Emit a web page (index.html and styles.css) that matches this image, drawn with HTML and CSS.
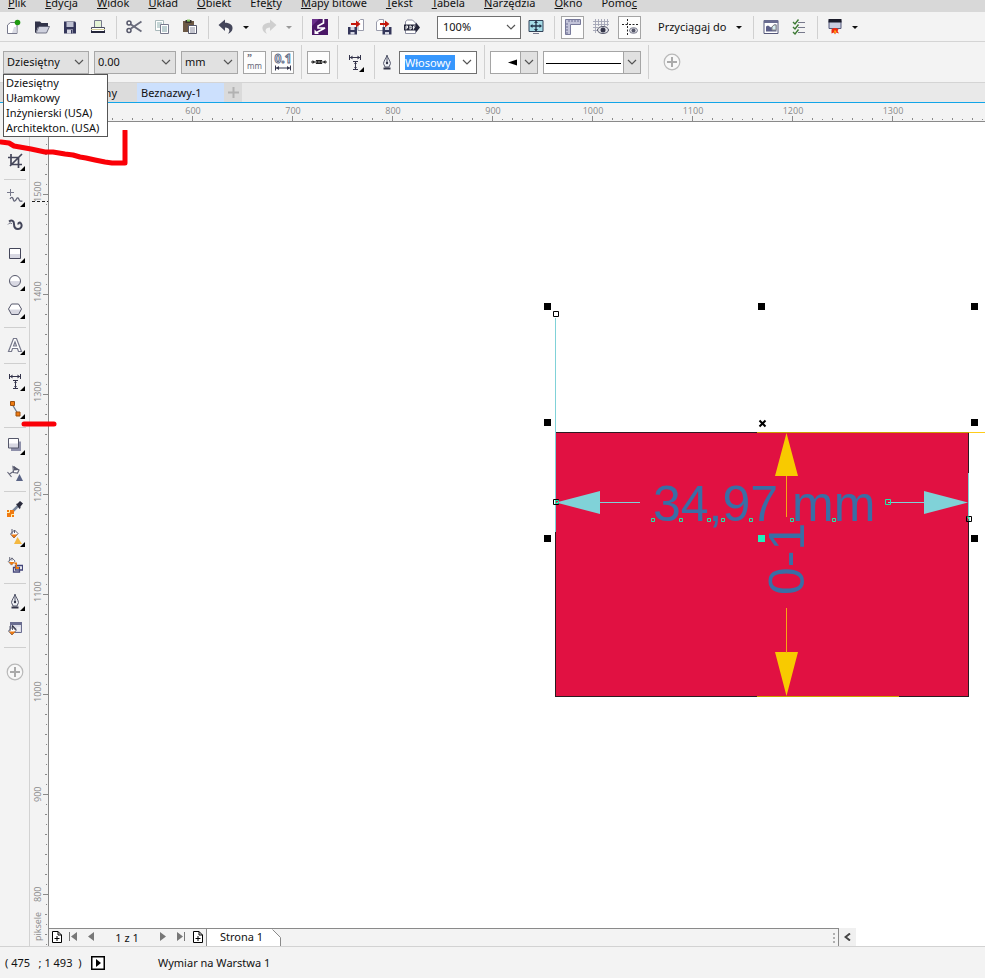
FILE: index.html
```html
<!DOCTYPE html>
<html lang="pl">
<head>
<meta charset="utf-8">
<title>Beznazwy-1</title>
<link rel="stylesheet" href="styles.css">
</head>
<body>
<svg class="defs" aria-hidden="true">
  <defs>
    <linearGradient id="shade" x1="0" y1="0" x2="0" y2="1"><stop offset=".5" stop-color="#fff"/><stop offset=".55" stop-color="#d8d8e2"/></linearGradient>
    <symbol id="chev" viewBox="0 0 10 6"><path d="M1 1l4 4 4-4" fill="none" stroke="#555" stroke-width="1.2"/></symbol>
    <symbol id="caret" viewBox="0 0 6 3"><path d="M0 0h6L3 3z" fill="currentColor"/></symbol>
    <symbol id="plus" viewBox="0 0 18 18"><circle cx="9" cy="9" r="7.8" fill="#f8f8f8" stroke="#b9b9b9" stroke-width="1.2"/><path d="M9 4v10M4 9h10" stroke="#aaa" stroke-width="2"/></symbol>
    <symbol id="pen" viewBox="0 0 16 16"><path d="M8 1c-.5 3-3 5-3.500 8.500L6 13h4l1.500-3.500C11 6 8.500 4 8 1z" fill="#eef0f4" stroke="#55586c"/><path d="M8 2v7" stroke="#55586c"/><circle cx="8" cy="9" r="1.200" fill="#333548"/><path d="M4.500 14.500h7" stroke="#333548" stroke-width="2"/></symbol>
    <symbol id="dim" viewBox="0 0 16 16"><path d="M2.500 1v5M13.500 1v5M3 3.500h10M8.500 7v8M6 7.500h5M6 15.500h5" fill="none" stroke="#33334a"/><path d="M3 3.500l2.500-2v4zM13 3.500l-2.500-2v4zM8.500 8l-1.500 2h3zM8.500 15l-1.500-2h3z" fill="#33334a"/></symbol>
    <symbol id="addpage" viewBox="0 0 10 12"><path d="M.5.500h5.500l3.500 3.500v7.500H.5zM6 .500V4h3.500" fill="#fff" stroke="#000"/><path d="M5 5v5M2.500 7.500h5" stroke="#000"/></symbol>
    <symbol id="bucket" viewBox="0 0 10 10"><path d="M1.500 5l4-4 3.500 3.500-4 4.500z" fill="#fff" stroke="#5b5d72"/><path d="M2 5.500h6.500L5 9z" fill="#ee7a10"/><path d="M3 0v5M5.500 1v3" stroke="#5b5d72"/></symbol>
  </defs>
</svg>
<div class="app">
  <nav class="menu">
    <a href="#"><u>P</u>lik</a><a href="#"><u>E</u>dycja</a><a href="#"><u>W</u>idok</a><a href="#"><u>U</u>kład</a><a href="#"><u>O</u>biekt</a><a href="#">Efe<u>k</u>ty</a><a href="#"><u>M</u>apy bitowe</a><a href="#"><u>T</u>ekst</a><a href="#"><u>T</u>abela</a><a href="#"><u>N</u>arzędzia</a><a href="#"><u>O</u>kno</a><a href="#">Pomo<u>c</u></a>
  </nav>

  <div class="bar standard">
    <button class="tool" aria-label="Nowy"><svg class="icon" viewBox="0 0 16 16"><path d="M1.500 14.500V6l3-2.500h6.500v11z" fill="#fff" stroke="#77798c"/><path d="M8 8h2.500v6H6z" fill="#d9dae3"/><circle cx="11.500" cy="3.500" r="2.800" fill="#1f9a10"/></svg></button>
    <button class="tool" aria-label="Otwórz"><svg class="icon" viewBox="0 0 16 16"><path d="M1 2.500h5l1.500 1.500H14v4H4l-2.500 6H1z" fill="#313349"/><path d="M5 7.500h10.500l-3 6.500H2z" fill="#cfd1de" stroke="#55586c" stroke-width=".8"/></svg></button>
    <button class="tool" aria-label="Zapisz"><svg class="icon" viewBox="0 0 16 16"><path d="M2 2.500h11l1 1V14.500H2z" fill="#34365a"/><path d="M4.500 3h7v5h-7z" fill="#bfc1d2"/><path d="M5 10.500h6v4H5z" fill="#d8d9e4"/><path d="M9 11h1.500v3.500H9z" fill="#34365a"/></svg></button>
    <button class="tool" aria-label="Drukuj"><svg class="icon" viewBox="0 0 16 16"><path d="M4.500 9V1.500h7V9" fill="#e4f3d6" stroke="#77798c"/><path d="M1.500 8.500h13v4h-13z" fill="#fff" stroke="#4a4c60"/><path d="M1 10h14v1H1z" fill="#d5cf9a"/><path d="M1 13h14" stroke="#25263a" stroke-width="2"/></svg></button>
    <span class="sep"></span>
    <button class="tool" aria-label="Wytnij"><svg class="icon" viewBox="0 0 16 16"><path d="M15.500 2.500L5 9.500M15.500 12.500L5 5.500" stroke="#6a6c7c" stroke-width="2"/><circle cx="3" cy="4" r="2" fill="none" stroke="#55576a" stroke-width="1.500"/><circle cx="3" cy="11.500" r="2" fill="none" stroke="#55576a" stroke-width="1.500"/></svg></button>
    <button class="tool" aria-label="Kopiuj"><svg class="icon" viewBox="0 0 16 16"><path d="M1.500 1.500h8v10h-8z" fill="#fff" stroke="#a9b9bb"/><path d="M3 4h5M3 6h3M3 8h3" stroke="#8fb0b0"/><path d="M6.500 5.500h8v9h-8z" fill="#fff" stroke="#77798c"/><path d="M8 8h5M8 10h5M8 12h5" stroke="#7d9fa3"/></svg></button>
    <button class="tool" aria-label="Wklej"><svg class="icon" viewBox="0 0 16 16"><path d="M1 2h11v11H1z" fill="#6c5844"/><path d="M3.500 1h6v3h-6z" fill="#34302c"/><path d="M5 .500h3v2H5z" fill="#87c65e"/><path d="M6.500 6.500h8v8h-8z" fill="#fff" stroke="#55576a"/><path d="M8 9h5M8 11h5M8 13h5" stroke="#8b8da0"/></svg></button>
    <span class="sep"></span>
    <button class="tool" aria-label="Cofnij"><svg class="icon" viewBox="0 0 16 16"><path d="M.5 6L7 .500v3.200c5 0 8 2.500 7.500 6-.3 2.500-2 4-4.500 5 2-2 2.500-6-3-6.200V12z" fill="#44465a"/></svg></button><button class="drop" aria-label="Lista cofania"><svg class="caret"><use href="#caret"/></svg></button>
    <button class="tool" aria-label="Ponów"><svg class="icon" viewBox="0 0 16 16"><path d="M15.500 6L9 .500v3.200c-5 0-8 2.500-7.500 6 .3 2.500 2 4 4.500 5-2-2-2.500-6 3-6.200V12z" fill="#cfcfcf"/></svg></button><button class="drop dim" aria-label="Lista ponawiania"><svg class="caret"><use href="#caret"/></svg></button>
    <span class="sep"></span>
    <button class="tool" aria-label="Uruchom"><svg class="icon" viewBox="0 0 16 16"><path d="M0 0h16v16H0z" fill="#4a1766"/><path d="M0 0h7L0 7z" fill="#6a2f8a"/><path d="M11.500 0v4L6 7v2h7L4.500 13.500" fill="none" stroke="#fff" stroke-width="1.600"/><path d="M2.500 15V10.500L7 15z" fill="#fff"/></svg></button>
    <span class="sep"></span>
    <button class="tool" aria-label="Importuj"><svg class="icon" viewBox="0 0 16 16"><path d="M10 11.500V3l2.500-2.500h3v11z" fill="#fff" stroke="#9a9cac"/><path d="M0 8h9v7.500H0z" fill="#34365a"/><path d="M2.500 8h4v3h-4z" fill="#d5d6e2"/><path d="M2.500 13h4v2.500h-4z" fill="#d5d6e2"/><path d="M3 6V4h5V1.500L12.500 5 8 8.500V6z" fill="#c4160c"/></svg></button>
    <button class="tool" aria-label="Eksportuj"><svg class="icon" viewBox="0 0 16 16"><path d="M.5 11.500V3L3 .500h4.500v11z" fill="#fff" stroke="#9a9cac"/><path d="M6.500 8h9v7.500h-9z" fill="#34365a"/><path d="M9 8h4v3H9zM9 13h4v2.500H9z" fill="#d5d6e2"/><path d="M4 6V4h5V1.500L13.500 5 9 8.500V6z" fill="#c4160c"/></svg></button>
    <button class="tool" aria-label="Publikuj do PDF"><svg class="icon" viewBox="0 0 16 16"><path d="M1.500 14.500V2.500L3.500 1h5l3 3v10.500z" fill="#fff" stroke="#8b8da0"/><path d="M0 5.500h12V3.500l4 5-4 5v-2H0z" fill="#25263a"/><path d="M2 10.500V7h1.500v2H2M6 7v3M5.500 7h1.500l.8 1.500L7 10H5.500M9.500 10.500V7h2M9.500 8.700h1.500" stroke="#fff" stroke-width=".9" fill="none"/></svg></button>
    <div class="combo zoom"><input type="text" aria-label="Poziom powiększenia" value="100%"><svg class="chev"><use href="#chev"/></svg></div>
    <button class="tool" aria-label="Pełny ekran"><svg class="icon" viewBox="0 0 16 16"><path d="M1 1.500h14v11H1z" fill="#a5dbe6" stroke="#33435a"/><path d="M8 2.500v9M3 7h10" stroke="#24344a" stroke-width="1.300"/><path d="M8 1.500l2 2.500H6zM8 12.500l2-2.500H6zM2 7l2.500-2v4zM14 7l-2.500-2v4z" fill="#24344a"/><path d="M5 14.500h6" stroke="#77798c"/></svg></button>
    <span class="sep"></span>
    <button class="toggle" aria-label="Linijki"><svg class="icon" viewBox="0 0 16 16"><path d="M.5.500h15v5h-10v10h-5z" fill="#c2c3d8" stroke="#77799a"/><path d="M4 1v2M7 1v2M10 1v2M13 1v2M1 5h2M1 8h2M1 11h2M1 14h2" stroke="#6c6e92"/></svg></button>
    <button class="tool" aria-label="Siatka"><svg class="icon" viewBox="0 0 16 16"><path d="M2.500 0v14M5.500 0v7M8.500 0v7M11.500 0v7M14.500 0v7M0 2.500h16M0 5.500h16M0 8.500h5M0 11.500h5" stroke="#a2a4b4" stroke-width=".9"/><ellipse cx="10" cy="11" rx="5.500" ry="3.500" fill="#e2e3e8" stroke="#55576a"/><circle cx="10" cy="11" r="2.500" fill="#35364a"/></svg></button>
    <button class="toggle" aria-label="Prowadnice"><svg class="icon" viewBox="0 0 16 16"><path d="M5.500 0v16M0 5.500h16" stroke="#222" stroke-dasharray="2 1.500"/><ellipse cx="11.500" cy="11.500" rx="4" ry="2.800" fill="#e2e3e8" stroke="#77798c"/><circle cx="11.500" cy="11.500" r="2" fill="#55576a"/></svg></button>
    <button class="snap">Przyciągaj do<svg class="caret"><use href="#caret"/></svg></button>
    <span class="sep"></span>
    <button class="tool" aria-label="Ekran powitalny"><svg class="icon" viewBox="0 0 16 16"><path d="M1 1.500h14v13H1z" fill="#fff" stroke="#55587a"/><path d="M1 1h14v3H1z" fill="#6a6d90"/><path d="M3 12.500V7.500l2-1 3 2 3-3h2.500v7z" fill="#5b5e88"/><path d="M9 11V8l2-2h2v5z" fill="#d6eef2" stroke="#888"/></svg></button>
    <button class="tool" aria-label="Opcje"><svg class="icon" viewBox="0 0 16 16"><path d="M7 3.500h7M7 8.500h7M7 13.500h7" stroke="#77798c"/><path d="M2 3l2 2 3.500-4.500M2 8l2 2 3.500-4.500M2 13l2 2 3.500-4.500" fill="none" stroke="#3d7a34" stroke-width="1.400"/></svg></button>
    <span class="sep"></span>
    <button class="tool" aria-label="Uruchamianie aplikacji"><svg class="icon" viewBox="0 0 16 16"><path d="M2 1.500h12v8H2z" fill="#c8cde0" stroke="#55587a"/><path d="M1.500 0h13v3.500h-13z" fill="#1a1b2a"/><path d="M4.500 10.500c2-2 5-2 7 0l-1 1.500 1.500 2.500-3-1-1 2-1-2-2.500 1z" fill="#ef2a10"/><path d="M7 12l1-1 1.500 1.500L8 15z" fill="#ffae10"/></svg></button><button class="drop" aria-label="Lista aplikacji"><svg class="caret"><use href="#caret"/></svg></button>
  </div>

  <div class="bar property">
    <div class="field style">
      <select aria-label="Styl wymiaru"><option>Dziesiętny</option></select><svg class="chev"><use href="#chev"/></svg>
      <ul class="options" role="listbox" aria-label="Style wymiarów">
        <li role="option">Dziesiętny</li><li role="option">Ułamkowy</li><li role="option">Inżynierski (USA)</li><li role="option">Architekton. (USA)</li>
      </ul>
    </div>
    <div class="field precision"><select aria-label="Dokładność"><option>0.00</option></select><svg class="chev"><use href="#chev"/></svg></div>
    <div class="field units"><select aria-label="Jednostki"><option>mm</option></select><svg class="chev"><use href="#chev"/></svg></div>
    <button class="toggle" aria-label="Pokaż jednostki"><span class="unit"><b>”</b><i>mm</i></span></button>
    <button class="toggle" aria-label="Zero na początku"><svg class="icon wide" viewBox="0 0 18 18"><text x="9" y="10" text-anchor="middle" class="zero">0.1</text><path d="M1.500 12.500v5M16.500 12.500v5M2 15h14" stroke="#33344a"/><path d="M2 15l3-2v4zM16 15l-3-2v4z" fill="#33344a"/></svg></button>
    <span class="sep"></span>
    <button class="toggle" aria-label="Przedrostek"><svg class="icon" viewBox="0 0 16 16"><path d="M0 8h16" stroke="#222"/><path d="M4 8L1.500 6v4zM12 8l2.500-2v4z" fill="#222"/><path d="M5 6l3 4 3-4M5 10l3-4 3 4M5 6.500h6M5 9.500h6" fill="none" stroke="#222"/></svg></button>
    <span class="sep"></span>
    <button class="tool fly" aria-label="Położenie tekstu"><svg class="icon"><use href="#dim"/></svg></button>
    <span class="sep"></span>
    <label class="nib" for="outline"><svg class="icon" role="img" aria-label="Szerokość konturu"><use href="#pen"/></svg></label>
    <div class="combo outline"><input id="outline" type="text" value="Włosowy"><svg class="chev"><use href="#chev"/></svg></div>
    <span class="sep"></span>
    <button class="picker arrow" aria-label="Grot"><svg viewBox="0 0 29 21"><path d="M17 10.500l9-3v6z"/></svg><span><svg class="chev"><use href="#chev"/></svg></span></button>
    <button class="picker line" aria-label="Styl linii"><svg viewBox="0 0 79 21"><path d="M2 11h75v1H2z"/></svg><span><svg class="chev"><use href="#chev"/></svg></span></button>
    <span class="sep"></span>
    <button class="tool add" aria-label="Dodaj"><svg class="ring"><use href="#plus"/></svg></button>
  </div>

  <div class="tabs">
    <button class="tab behind">ny</button><button class="tab active">Beznazwy-1</button><button class="tab new" aria-label="Nowa karta"><svg viewBox="0 0 11 11"><path d="M5.500 0v11M0 5.500h11" stroke="#b2b2b2" stroke-width="2"/></svg></button>
  </div>

  <main class="work">
    <div class="toolbox">
      <button class="fly" aria-label="Kadrowanie"><svg class="icon" viewBox="0 0 16 16"><path d="M4 1v10.500h11M1 4.500h10.500V15M3 13L15 1" fill="none" stroke="#44465a" stroke-width="1.700"/></svg></button>
      <hr>
      <button class="fly" aria-label="Rysunek odręczny"><svg class="icon" viewBox="0 0 16 16"><path d="M3.500 0v7M0 3.500h7" stroke="#77798c"/><path d="M3 10c2-3 3-1 3.500 1s2 1 3-1 2-1 2.500.5 2 2 3.500 1.500" fill="none" stroke="#65677a" stroke-width="1.300"/></svg></button>
      <button aria-label="Środki artystyczne"><svg class="icon" viewBox="0 0 16 16"><path d="M2 4.500c3-2 5-.5 5 2.500s1 5 4 5 4.500-3 3-5.500c-1-1.500-3-1-2.500 1" fill="none" stroke="#44465a" stroke-width="2"/><path d="M1 7.500c1.500-2 3-2 4-.5" fill="none" stroke="#65677a"/></svg></button>
      <button class="fly" aria-label="Prostokąt"><svg class="icon" viewBox="0 0 16 16"><path d="M2.500 3.500h11v10h-11z" fill="url(#shade)" stroke="#44465a"/></svg></button>
      <button class="fly" aria-label="Elipsa"><svg class="icon" viewBox="0 0 16 16"><circle cx="8" cy="8" r="5.500" fill="url(#shade)" stroke="#55576a"/></svg></button>
      <button class="fly" aria-label="Wielokąt"><svg class="icon" viewBox="0 0 16 16"><path d="M4.500 3h7l3 5-3 5.500h-7L1.500 8z" fill="url(#shade)" stroke="#55576a"/></svg></button>
      <hr>
      <button class="fly" aria-label="Tekst"><svg class="icon" viewBox="0 0 16 16"><path d="M6.500 1.500h3l5 13h-3l-1-3h-5l-1 3h-3zM8 5L6.500 9h3z" fill="#fff" stroke="#77798c" stroke-width="1.200"/></svg></button>
      <hr>
      <button class="fly" aria-label="Wymiar"><svg class="icon"><use href="#dim"/></svg></button>
      <button class="fly" aria-label="Łącznik"><svg class="icon" viewBox="0 0 16 16"><path d="M5 3l6 10" stroke="#6a7a90" stroke-width="1.300"/><path d="M3.500.500h4v4h-4zM9 11h4v4H9z" fill="#ee7a10" stroke="#9a5010"/></svg></button>
      <hr>
      <button class="fly" aria-label="Cień"><svg class="icon" viewBox="0 0 16 16"><path d="M4 4.500h10v9.500H4z" fill="#8e90aa"/><path d="M1.500 1.500h10v9.500h-10z" fill="url(#shade)" stroke="#55576a"/></svg></button>
      <button aria-label="Przezroczystość"><svg class="icon" viewBox="0 0 16 16"><path d="M6 1.500l6 3.500-1.500 3-4-.5zM6.500 6.500L2.500 9M.5 7l4 5" fill="#fff" stroke="#65677a" stroke-width="1.200"/><path d="M7 1l5 4-5 .5z" fill="#55576a"/><path d="M12.500 9l3.500 7H9z" fill="#5a6486"/></svg></button>
      <hr>
      <button aria-label="Próbnik kolorów"><svg class="icon" viewBox="0 0 16 16"><path d="M5 11l6-6" stroke="#77859a" stroke-width="2.500"/><path d="M9 3l1.500-.5L13 0l3 2.500-2.500 3V7l-1 1z" fill="#2a2b3c"/><path d="M0 9h7v7H0z" fill="#f07a10"/><path d="M0 11.500h2.500V9M4.500 16v-2.500H7" fill="none" stroke="#fff3b0"/></svg></button>
      <button class="fly" aria-label="Wypełnienie interakcyjne"><svg class="icon" viewBox="0 0 16 16"><use href="#bucket" x="2" y="0" width="10" height="10"/><path d="M10.500 8l4.500 7H7z" fill="#f4b840"/></svg></button>
      <button aria-label="Inteligentne wypełnienie"><svg class="icon" viewBox="0 0 16 16"><use href="#bucket" x="0" y="0" width="9" height="9"/><path d="M8.500 8.500h7v4.500h-7zM6.500 10.500h6v4.500h-6z" fill="#fff" stroke="#44467a" stroke-width="1.300"/><path d="M7.500 5.500H10v4.500h2v2H8.500V7h-1z" fill="#ee7a10"/></svg></button>
      <hr>
      <button class="fly" aria-label="Pióro konturu"><svg class="icon"><use href="#pen"/></svg></button>
      <button aria-label="Edycja wypełnienia"><svg class="icon" viewBox="0 0 16 16"><path d="M3.500 1.500h11v10h-11z" fill="#dcdde8" stroke="#6a6d90"/><path d="M3 1h12v3H3z" fill="#6a6d90"/><path d="M10 7h3M10 9h3" stroke="#fff"/><path d="M5 4.500l4 4.500" stroke="#25263a" stroke-width="1.500"/><use href="#bucket" x="0" y="5" width="10" height="10"/></svg></button>
      <hr>
      <button class="last" aria-label="Szybkie dostosowywanie"><svg class="ring"><use href="#plus"/></svg></button>
    </div>

    <svg class="vruler" role="img" aria-label="Linijka pionowa, piksele">
      <defs><pattern id="vt" width="18" height="100" y="91" patternUnits="userSpaceOnUse"><path d="M13 .500h5M16 10.500h1M15 20.500h2M16 30.500h1M15 40.500h2M16 50.500h1M15 60.500h2M16 70.500h1M15 80.500h2M16 90.500h1" stroke="#8a8a8a"/></pattern></defs>
      <rect width="18" height="100%" fill="url(#vt)"/>
      <path d="M2 98.500h16" stroke="#222" stroke-dasharray="3 2"/>
      <g class="marks"><text transform="translate(11 99) rotate(-90)">1500</text><text transform="translate(11 199) rotate(-90)">1400</text><text transform="translate(11 299) rotate(-90)">1300</text><text transform="translate(11 399) rotate(-90)">1200</text><text transform="translate(11 499) rotate(-90)">1100</text><text transform="translate(11 599) rotate(-90)">1000</text><text transform="translate(11 699) rotate(-90)">900</text><text transform="translate(11 799) rotate(-90)">800</text><text transform="translate(11 838) rotate(-90)">piksele</text></g>
    </svg>

    <div class="stage">
      <svg class="hruler" role="img" aria-label="Linijka pozioma">
        <defs><pattern id="ht" width="100" height="18" x="43" patternUnits="userSpaceOnUse"><path d="M.5 13v5M10.500 16v1M20.500 15v2M30.500 16v1M40.500 15v2M50.500 16v1M60.500 15v2M70.500 16v1M80.500 15v2M90.500 16v1" stroke="#8a8a8a"/></pattern></defs>
        <rect width="100%" height="18" fill="url(#ht)"/>
        <g class="marks mid"><text x="144" y="11">600</text><text x="244" y="11">700</text><text x="344" y="11">800</text><text x="444" y="11">900</text><text x="544" y="11">1000</text><text x="644" y="11">1100</text><text x="744" y="11">1200</text><text x="844" y="11">1300</text></g>
      </svg>
      <div class="canvas">
        <svg width="936" height="806" viewBox="49 122 936 806">
          <rect x="555.500" y="432.500" width="413" height="264" fill="#e11142" stroke="#2b1a20"/>
          <path d="M757 432.500h228M757 696.500h142" stroke="#c9a000"/>
          <path d="M969 432.500h16" stroke="#ffcc1a"/>
          <path d="M555.500 318v214M968.500 473v46" stroke="#80d2d8"/>
          <g fill="#f8ca00"><path d="M786.500 433L798 476h-23zM786.500 696L798 652h-23z"/></g>
          <path d="M786.500 476v41M786.500 608v45" stroke="#f8a612"/>
          <text class="measure" transform="translate(804 595) rotate(-90)">0-1</text>
          <text class="measure" x="653" y="521">34,97 mm</text>
          <path d="M600 502.500h40M888 502.500h37" stroke="#80d2d8"/>
          <path d="M556 502.500L600 491v23zM968 502.500L924 491v23z" fill="#80d2d8"/>
          <g><path d="M544 303h7v7h-7zM758 303h7v7h-7zM971 303h7v7h-7zM544 419h7v7h-7zM971 419h7v7h-7zM544 535h7v7h-7zM971 535h7v7h-7z"/><path d="M758 535h7v7h-7z" fill="#20f0bc"/></g>
          <path d="M759.500 420.500l6 6M765.500 420.500l-6 6" stroke="#000" stroke-width="2"/>
          <g fill="#fff" stroke="#000"><path d="M553.500 311.500h5v5h-5z"/><path d="M966.500 516.500h5v5h-5zM553.500 499.500h5v5h-5z" fill="none"/></g>
          <g fill="none" stroke="#20e8a8"><path d="M651.500 518.500h3v3h-3zM679.500 518.500h3v3h-3zM707.500 518.500h3v3h-3zM721.500 518.500h3v3h-3zM749.500 518.500h3v3h-3zM790.500 518.500h3v3h-3zM832.500 518.500h3v3h-3zM885.500 499.500h5v5h-5zM555.500 500.500h3v3h-3zM967 517h2v4"/></g>
        </svg>
      </div>
      <div class="pages">
        <div class="pagebar">
          <button class="p-add" aria-label="Dodaj stronę przed"><svg><use href="#addpage"/></svg></button>
          <button class="p-nav" aria-label="Pierwsza strona"><svg viewBox="0 0 8 9"><path d="M0 0h1v9H0zM8 0v9L2 4.500z"/></svg></button>
          <button class="p-nav" aria-label="Poprzednia strona"><svg viewBox="0 0 8 9"><path d="M7 0v9L1 4.500z"/></svg></button>
          <span class="p-count">1 z 1</span>
          <button class="p-nav" aria-label="Następna strona"><svg viewBox="0 0 8 9"><path d="M1 0v9l6-4.500z"/></svg></button>
          <button class="p-nav" aria-label="Ostatnia strona"><svg viewBox="0 0 8 9"><path d="M7 0h1v9H7zM0 0v9l6-4.500z"/></svg></button>
          <button class="p-add" aria-label="Dodaj stronę za"><svg><use href="#addpage"/></svg></button>
          <button class="p-tab">Strona 1<svg viewBox="0 0 9 17"><path d="M1 0h8v10z" fill="#f3f3f3"/><path d="M.5.500l8 8V17" fill="none" stroke="#8a8a8a"/></svg></button>
          <span class="grip"></span>
        </div>
        <button class="scroll" aria-label="Przewiń w lewo"><svg viewBox="0 0 7 8"><path d="M6 .500L1.500 4 6 7.500" fill="none" stroke="#444" stroke-width="2"/></svg></button>
      </div>
    </div>
  </main>

  <footer class="status">
    <span class="pos">( 475 &nbsp; ; 1 493 &nbsp;)</span>
    <button class="play" aria-label="Odtwórz"><svg viewBox="0 0 14 14"><path d="M.75.750h12.500v12.500H.75z" fill="#fff" stroke="#000" stroke-width="1.500"/><path d="M5 3v8l5-4z"/></svg></button>
    <span>Wymiar na Warstwa 1</span>
  </footer>

  <svg class="marker" viewBox="0 0 130 300" aria-hidden="true"><path d="M1 12l8 1 5 3 17 3 14 3h8l12 2 8 1 7 2 6 1 9 2 10 2 7 1h13V1"/><path d="M24 294h30"/></svg>
</div>
</body>
</html>
```
FILE: styles.css
```css
* { box-sizing: border-box; }
html, body { height: 100%; margin: 0; }
body, button, input, select { font: 11px/14px "Noto Sans", "Open Sans", sans-serif; color: #111; }
button { padding: 0; border: 0; background: none; }
svg { display: block; flex: none; }
.defs { position: absolute; width: 0; height: 0; }

.app { position: relative; display: flex; flex-direction: column; height: 100vh; overflow: hidden; background: #f3f3f3; }

.menu { display: flex; align-items: flex-end; gap: 19px; flex: none; height: 12px; padding: 0 8px 2px; background: #d8d8d8; overflow: hidden; white-space: nowrap; }
.menu a { color: inherit; text-decoration: none; }

.bar { display: flex; align-items: center; flex: none; border-bottom: 1px solid #d4d4d4; }
.standard { height: 30px; padding-top: 1px; }
.property { height: 41px; gap: 5px; padding-left: 3px; }
.sep { flex: none; width: 1px; height: 23px; margin: 0 3px 0 4px; background: #d0d0d0; }
.property .sep { height: 34px; margin: 0 0 0 2px; }
.icon { width: 16px; height: 16px; }
.icon.wide { width: 18px; height: 18px; }
.ring { width: 18px; height: 18px; }
.chev { width: 10px; height: 6px; }
.caret { width: 6px; height: 3px; }

.tool { position: relative; display: flex; align-items: center; justify-content: center; flex: none; width: 28px; height: 24px; }
.property .tool { width: 24px; }
.property .add { width: 36px; }
.drop { display: flex; align-items: center; justify-content: center; width: 15px; height: 24px; padding-right: 4px; }
.drop.dim { color: #999; }
.toggle { display: flex; align-items: center; justify-content: center; flex: none; width: 23px; height: 23px; border: 1px solid #a5a5a5; background: #fdfdfd; }
.standard .toggle { margin: 0 3px; }
.snap { display: flex; align-items: center; justify-content: space-between; width: 105px; height: 24px; padding: 0 7px 0 14px; white-space: nowrap; }
.unit { display: flex; flex-direction: column; align-items: flex-start; font-size: 8px; line-height: 8px; color: #667; }
.unit b { font: bold 10px/8px "Liberation Serif", serif; }
.unit i { font-style: normal; }
.zero { font: bold 12px "Open Sans", sans-serif; fill: #fff; stroke: #5c6a86; stroke-width: 1px; }

.combo, .field { position: relative; display: flex; align-items: center; flex: none; height: 23px; border: 1px solid #707070; background: #fff; }
.combo input { min-width: 0; padding: 0; border: 0; outline: 0; background: none; }
.combo .chev, .field > .chev { margin: 0 4px 0 auto; }
.zoom { width: 84px; margin: 0 1px 0 11px; padding-left: 5px; }
.zoom input { width: 60px; }
.outline { width: 78px; padding-left: 5px; }
.outline input { width: 50px; height: 15px; background: #3797fd; color: #fff; }
.nib { width: 14px; display: flex; justify-content: center; }

.field { border-color: #a8a8a8; background: #e1e1e1; }
.field select { position: absolute; inset: 0; width: 100%; padding: 0 0 0 3px; border: 0; outline: 0; background: none; appearance: none; }
.style { width: 86px; }
.precision { width: 82px; }
.units { width: 57px; }
.options { position: absolute; z-index: 3; top: 22px; left: -1px; width: 105px; margin: 0; padding: 0 0 1px 2px; border: 1px solid #555; background: #fff; list-style: none; line-height: 15px; white-space: nowrap; }
.picker { display: flex; height: 23px; border: 1px solid #a5a5a5; background: #fff; }
.picker > svg { flex: 1; min-width: 0; height: 21px; }
.picker span { display: flex; align-items: center; justify-content: center; width: 17px; border-left: 1px solid #a5a5a5; background: #e1e1e1; }
.arrow { width: 48px; }
.line { width: 98px; }

.tabs { display: flex; flex: none; height: 20px; border-bottom: 1px solid #12a5e8; background: #e9e9e9; }
.tab { display: flex; align-items: center; height: 19px; }
.behind { justify-content: flex-end; width: 137px; padding-right: 20px; background: #dcdcdc; }
.active { width: 87px; padding-left: 4px; background: #cce0fd; }
.new { justify-content: center; width: 18px; background: #dadada; }
.new svg { width: 11px; height: 11px; }

.work { display: flex; flex: 1; min-height: 0; }
.toolbox { flex: none; width: 30px; padding-top: 44px; border-right: 1px solid #d2d2d2; }
.toolbox button { position: relative; display: flex; align-items: center; justify-content: center; width: 30px; height: 28px; }
.toolbox .last { height: 42px; }
.toolbox hr { width: 22px; height: 1px; margin: 4px 4px 3px; border: 0; background: #cfcfcf; }
.fly::after { content: ""; position: absolute; right: 5px; bottom: 4px; border: solid; border-width: 0 0 5px 5px; border-color: transparent transparent #000; }
.property .fly::after { right: 3px; bottom: 2px; }
.vruler { width: 19px; height: 100%; border-right: 1px solid #8a8a8a; }
.marks { font: 9px "Open Sans", sans-serif; fill: #8a8a8a; }
.mid { text-anchor: middle; }
.stage { display: flex; flex-direction: column; flex: 1; min-width: 0; }
.hruler { width: 100%; height: 19px; border-bottom: 1px solid #8a8a8a; }
.canvas { flex: 1; min-height: 0; overflow: hidden; background: #fff; }
.measure { font: 50px "Liberation Sans", sans-serif; fill: #3a6ea5; }

.pages { display: flex; flex: none; height: 18px; background: #fff; }
.pagebar { display: flex; align-items: center; flex: 0 1 790px; border: solid #8a8a8a; border-width: 1px 1px 0 0; background: #f3f3f3; }
.pagebar button { display: flex; align-items: center; justify-content: center; height: 17px; padding-bottom: 2px; }
.p-add svg { width: 10px; height: 12px; }
.p-add { width: 15px; }
.p-nav { width: 18px; fill: #777; }
.p-nav svg { width: 8px; height: 9px; }
.p-count { width: 54px; text-align: center; }
.pagebar .p-tab { position: relative; justify-content: flex-start; width: 75px; margin-left: 1px; padding: 0 0 2px 13px; border-left: 1px solid #8a8a8a; background: #fff; }
.p-tab svg { position: absolute; top: 0; right: 0; width: 9px; height: 17px; }
.grip { width: 2px; height: 10px; margin: 0 3px 0 auto; background: repeating-linear-gradient(#b0b0b0 0 2px, transparent 2px 4px); }
.scroll { display: flex; align-items: center; justify-content: center; width: 17px; background: #f0f0f0; }
.scroll svg { width: 7px; height: 8px; }

.status { display: flex; align-items: center; flex: none; height: 32px; padding: 1px 5px 0; border-top: 1px solid #d2d2d2; white-space: nowrap; }
.pos { width: 86px; }
.play { width: 14px; margin-right: 53px; }

.marker { position: absolute; z-index: 4; top: 130px; left: 0; width: 130px; height: 300px; pointer-events: none; }
.marker path { fill: none; stroke: #fa0007; stroke-width: 5; stroke-linejoin: round; stroke-linecap: round; }
```
